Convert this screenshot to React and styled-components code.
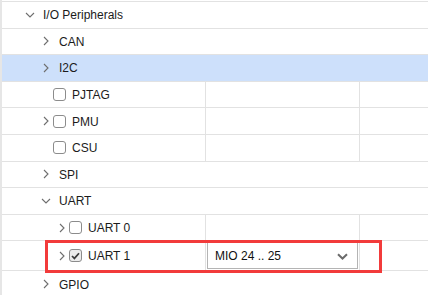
import React from 'react'
import styled, { createGlobalStyle } from 'styled-components'

const GlobalStyle = createGlobalStyle`
    html, body {
        margin: 0;
        padding: 0;
        background: #ffffff;
    }
    body {
        font-family: "Liberation Sans", Arial, sans-serif;
        font-size: 12px;
        color: #1b1b1b;
    }
`

const Tree = styled.div`
    width: 428px;
    height: 295px;
    overflow: hidden;
    box-sizing: border-box;
    border-left: 2px solid #e6e6e6;
    padding-top: 1px;
`

const TopEdge = styled.div`
    height: 0;
    border-top: 1px solid #e2e2e2;
`

const Row = styled.div`
    position: relative;
    display: grid;
    grid-template-columns: ${ (p) => p.$split ? '203px 154px 1fr' : '1fr' };
    height: ${ (p) => p.$tall ? '30px' : '26.6px' };
    box-sizing: border-box;
    border-bottom: 1px solid #e2e2e2;
    background: ${ (p) => p.$selected ? '#cde0fb' : 'transparent' };
`

const NameCell = styled.div`
    display: flex;
    align-items: center;
    padding-left: ${ (p) => 20 + (p.$level - 1) * 16 }px;
`

const Cell = styled.div`
    display: flex;
    align-items: center;
    border-left: 1px solid #e2e2e2;
`

const Toggle = styled.span`
    display: flex;
    align-items: center;
    justify-content: center;
    width: 15px;
    flex: none;
    color: #6e6e6e;
`

const Box = styled.span`
    width: 13px;
    height: 13px;
    box-sizing: border-box;
    border: 1.4px solid #8c8c8c;
    border-radius: 3px;
    background: ${ (p) => p.$checked ? '#ececec' : '#ffffff' };
    display: flex;
    align-items: center;
    justify-content: center;
    flex: none;
    margin-right: 6px;
`

const Label = styled.span`
    margin-left: ${ (p) => p.$gap ? '6px' : '0' };
    white-space: nowrap;
    padding-top: 1px;
`

const Select = styled.div`
    display: flex;
    align-items: center;
    justify-content: space-between;
    margin-left: 1px;
    width: 151px;
    height: 27px;
    box-sizing: border-box;
    border: 1px solid #b4b4b4;
    padding: 1px 9px 0 7px;
    background: #ffffff;
    color: #111;
`

const Marker = styled.div`
    position: absolute;
    left: 43px;
    top: -1px;
    width: 337px;
    height: 33px;
    box-sizing: border-box;
    border: 3px solid #f23b3b;
    pointer-events: none;
`

const ChevronRight = () => (
    <svg width="6" height="10" viewBox="0 0 6 10">
        <path d="M1 1 L5 5 L1 9" fill="none" stroke="currentColor" strokeWidth="1.1" />
    </svg>
)

const ChevronDown = () => (
    <svg width="10" height="6" viewBox="0 0 10 6">
        <path d="M1 1 L5 5 L9 1" fill="none" stroke="currentColor" strokeWidth="1.1" />
    </svg>
)

const SelectArrow = () => (
    <svg width="11" height="7" viewBox="0 0 11 7">
        <path d="M1 1.2 L5.5 5.5 L10 1.2" fill="none" stroke="#6b6b6b" strokeWidth="2" />
    </svg>
)

const Check = () => (
    <svg width="9" height="8" viewBox="0 0 9 8">
        <path d="M1 4 L3.4 6.4 L8 1.2" fill="none" stroke="#3c3c3c" strokeWidth="1.7" />
    </svg>
)

const rows = [
    { name: 'I/O Peripherals', level: 1, toggle: 'open' },
    { name: 'CAN', level: 2, toggle: 'closed' },
    { name: 'I2C', level: 2, toggle: 'closed', selected: true },
    { name: 'PJTAG', level: 2, box: 'off' },
    { name: 'PMU', level: 2, toggle: 'closed', box: 'off' },
    { name: 'CSU', level: 2, box: 'off' },
    { name: 'SPI', level: 2, toggle: 'closed' },
    { name: 'UART', level: 2, toggle: 'open' },
    { name: 'UART 0', level: 3, toggle: 'closed', box: 'off' },
    { name: 'UART 1', level: 3, toggle: 'closed', box: 'on', value: 'MIO 24 .. 25', marked: true },
    { name: 'GPIO', level: 2, toggle: 'closed' },
]

function TreeRow ({ row }) {
    const split = !!row.box

    return (
        <Row $split={ split } $selected={ row.selected } $tall={ !!row.value }>
            <NameCell $level={ row.level }>
                <Toggle>
                    { row.toggle === 'open' && <ChevronDown /> }
                    { row.toggle === 'closed' && <ChevronRight /> }
                </Toggle>
                { row.box && (
                    <Box $checked={ row.box === 'on' }>
                        { row.box === 'on' && <Check /> }
                    </Box>
                ) }
                <Label $gap={ !row.box }>{ row.name }</Label>
            </NameCell>
            { split && (
                <Cell>
                    { row.value && (
                        <Select>
                            <span>{ row.value }</span>
                            <SelectArrow />
                        </Select>
                    ) }
                </Cell>
            ) }
            { split && <Cell /> }
            { row.marked && <Marker /> }
        </Row>
    )
}

export default function App () {
    return (
        <>
            <GlobalStyle />
            <Tree>
                <TopEdge />
                { rows.map((row) => <TreeRow key={ row.name } row={ row } />) }
            </Tree>
        </>
    )
}
